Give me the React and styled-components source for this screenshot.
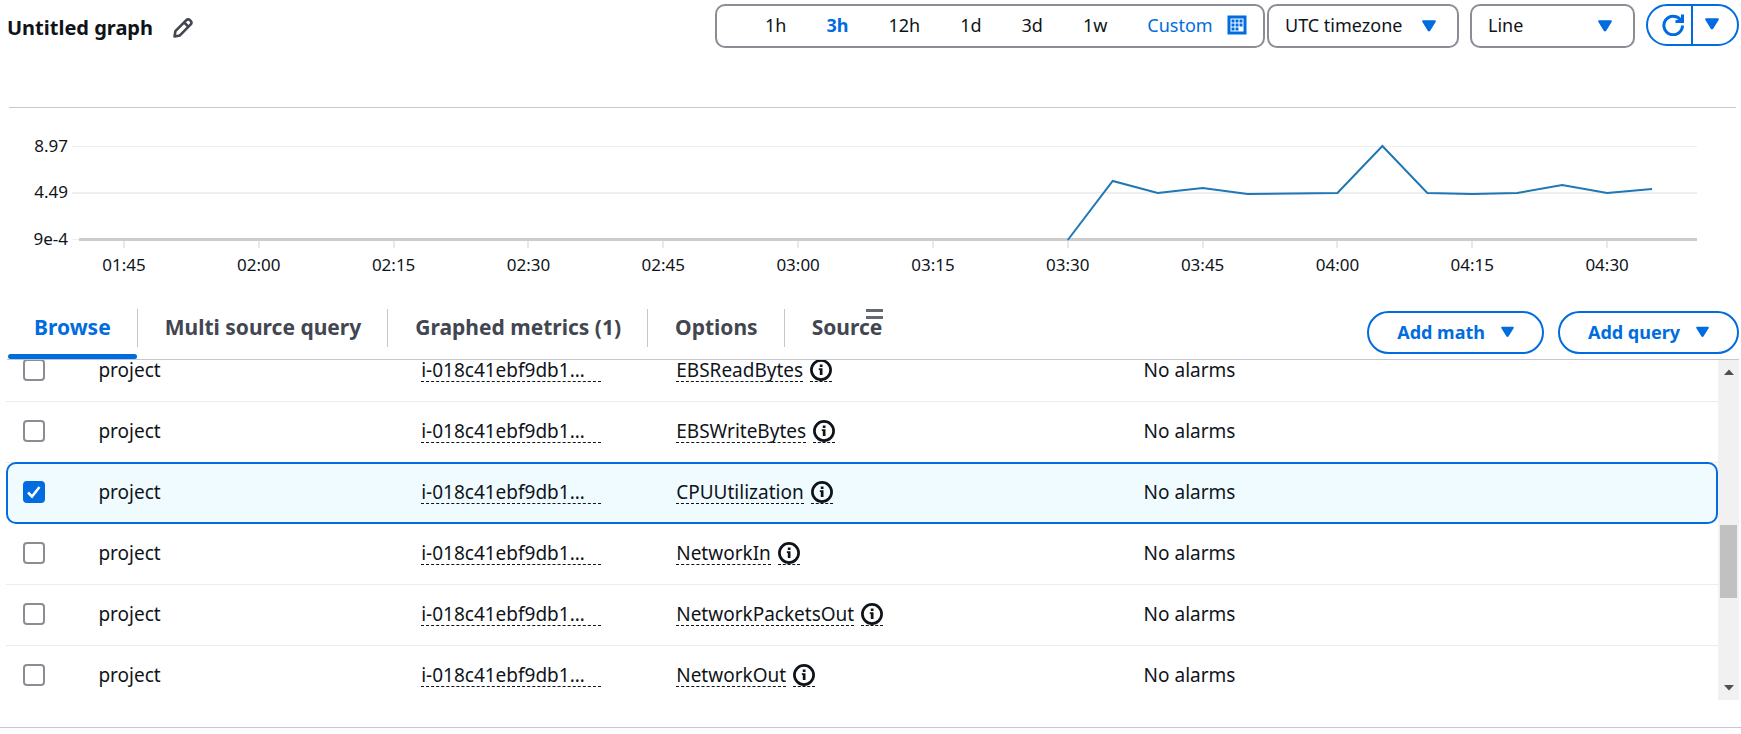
import React, { useState } from "react";
import styled, { createGlobalStyle, css } from "styled-components";

const blue = "#006ce0";
const ink = "#0f141a";
const grey = "#424650";
const line = "#c6c6cd";
const control = "#8c8c94";

const GlobalStyle = createGlobalStyle`
  * { box-sizing: border-box; }
  body {
    margin: 0;
    background: #fff;
    color: ${ink};
    font: 400 18px/24px "Noto Sans", "Open Sans", sans-serif;
  }
  button, select { font: inherit; color: inherit; }
`;

const Page = styled.main`
  display: flex;
  flex-direction: column;
  border-bottom: 1px solid ${line};
  padding-bottom: 27px;
`;

const Header = styled.header`
  display: flex;
  justify-content: space-between;
  align-items: flex-start;
  padding: 4px 2px 0 7px;
  min-height: 107px;
`;

const TitleGroup = styled.div`
  display: flex;
  align-items: center;
  gap: 16px;
  height: 48px;
`;

const Title = styled.h1`
  margin: 0;
  font-size: 20px;
  line-height: 28px;
  font-weight: 700;
`;

const IconButton = styled.button`
  display: flex;
  align-items: center;
  justify-content: center;
  padding: 4px;
  border: 0;
  background: none;
  color: ${grey};
  cursor: pointer;
`;

const Toolbar = styled.div`
  display: flex;
  align-items: flex-start;
`;

const RangeBox = styled.div`
  display: flex;
  align-items: center;
  gap: 40px;
  height: 44px;
  width: 550px;
  padding: 0 16px 2px 48px;
  border: 2px solid ${control};
  border-radius: 10px;
`;

const RangeButton = styled.button`
  display: flex;
  align-items: center;
  gap: 14px;
  padding: 0;
  border: 0;
  background: none;
  cursor: pointer;
  color: ${(p) => (p.$accent ? blue : ink)};
  font-weight: ${(p) => (p.$active ? 700 : 400)};
`;

const SelectBox = styled.div`
  position: relative;
  width: ${(p) => p.$width}px;
  margin-left: ${(p) => p.$gap}px;

  svg {
    position: absolute;
    top: 16px;
    right: 23px;
    pointer-events: none;
  }
`;

const Select = styled.select`
  display: block;
  appearance: none;
  width: 100%;
  height: 44px;
  padding: 0 40px 2px 16px;
  border: 2px solid ${control};
  border-radius: 10px;
  background: #fff;
`;

const SplitButton = styled.div`
  display: flex;
  height: 42px;
  margin-left: 11px;
  border: 2px solid ${blue};
  border-radius: 21px;
  overflow: hidden;
`;

const SplitPart = styled.button`
  display: flex;
  align-items: center;
  justify-content: center;
  width: 43px;
  padding: 0 0 0 6px;
  border: 0;
  background: none;
  color: ${blue};
  cursor: pointer;

  & + & {
    width: 46px;
    padding: 0 6px 2px 0;
    border-left: 2px solid ${blue};
  }
`;

const ChartPanel = styled.section`
  margin: 0 5px 0 9px;
  padding: 0 39px 0 70px;
  border-top: 1px solid ${line};
`;

const ChartSvg = styled.svg`
  display: block;
  width: 100%;
  height: 188px;
  overflow: visible;

  text { font-size: 17px; fill: ${ink}; }
`;

const TabBar = styled.div`
  display: flex;
  justify-content: space-between;
  align-items: flex-start;
  margin: 0 2px 0 7px;
  height: 64px;
  border-bottom: 1px solid ${line};
`;

const Tabs = styled.div`
  display: flex;
  position: relative;
  padding-top: 13px;
`;

const Tab = styled.button`
  position: relative;
  height: 38px;
  padding: 0 26px 2px 27px;
  border: 0;
  border-right: 1px solid ${line};
  background: none;
  color: ${grey};
  font-size: 21px;
  line-height: 28px;
  font-weight: 700;
  cursor: pointer;

  &:last-of-type { border-right: 0; padding-right: 0; }

  ${(p) =>
    p.$active &&
    css`
      color: ${blue};
      &::after {
        content: "";
        position: absolute;
        left: 1px;
        right: 0;
        bottom: -12px;
        height: 5px;
        border-radius: 3px;
        background: ${blue};
      }
    `}
`;

const DragHandle = styled.span`
  position: absolute;
  top: 13px;
  right: -1px;
  z-index: 1;
  width: 17px;
  height: 10px;
  border: solid #656871;
  border-width: 3px 0;
  cursor: row-resize;
`;

const Actions = styled.div`
  display: flex;
  gap: 14px;
  padding-top: 15px;
`;

const ActionButton = styled.button`
  display: flex;
  align-items: center;
  gap: 16px;
  height: 43px;
  padding: 0 28px 2px;
  border: 2px solid ${blue};
  border-radius: 22px;
  background: #fff;
  color: ${blue};
  font-weight: 700;
  cursor: pointer;
`;

const ScrollArea = styled.div`
  display: flex;
  height: 340px;
  margin: 0 2px 0 6px;
  overflow: hidden;
`;

const MetricsTable = styled.table`
  flex: 1;
  align-self: flex-start;
  margin-top: -19px;
  table-layout: fixed;
  border-collapse: separate;
  border-spacing: 0;
  font-size: 19px;
`;

const Row = styled.tr`
  position: relative;
  z-index: 0;

  ${(p) =>
    p.$selected &&
    css`
      td:first-child::before {
        content: "";
        position: absolute;
        z-index: -1;
        inset: -1px 0 0;
        border: 2px solid ${blue};
        border-radius: 10px;
        background: #f0fbff;
      }
    `}
`;

const Cell = styled.td`
  height: 61px;
  padding: 0 0 2px;
  border-bottom: 1px solid ${(p) => (p.$bare ? "transparent" : "#ebebf0")};
  vertical-align: middle;
  white-space: nowrap;
`;

const Checkbox = styled.input`
  appearance: none;
  display: block;
  width: 22px;
  height: 22px;
  margin: 0 0 0 17px;
  border: 2px solid ${control};
  border-radius: 4px;
  background: #fff;

  &:checked {
    border-color: ${blue};
    background: ${blue};
  }
`;

const CheckCell = styled.label`
  display: grid;
  justify-content: start;

  > * { grid-area: 1 / 1; }
  svg { margin: 4px 0 0 21px; pointer-events: none; z-index: 1; }
`;

const CellContent = styled.div`
  display: flex;
  align-items: center;
  gap: 7px;
`;

const Dashed = styled.span`
  width: ${(p) => (p.$wide ? "180px" : "auto")};
  height: 23px;
  line-height: 22px;
  border-bottom: 1px dashed ${ink};
`;

const InfoButton = styled.button`
  display: flex;
  height: 23px;
  padding: 0;
  border: 0;
  border-bottom: 1px dashed ${ink};
  background: none;
  cursor: pointer;
`;

const Scrollbar = styled.div`
  display: flex;
  flex-direction: column;
  align-items: center;
  width: 21px;
  padding: 9px 0;
  background: #f1f1f1;
`;

const Thumb = styled.div`
  width: 17px;
  height: 73px;
  margin: 150px 0 auto;
  background: #c1c1c1;
`;

const Caret = ({ size = 14 }) => (
  <svg width={size} height="12" viewBox="0 0 14 12" fill={blue} aria-hidden="true">
    <path d="M1.2.3h11.6c.9 0 1.3.9.8 1.6L8.200 10.700c-.6 1-1.800 1-2.400 0L.4 1.900C-.1 1.200.3.3 1.200.3z" />
  </svg>
);

const Pencil = () => (
  <svg width="20" height="20" viewBox="0 0 20 20" fill="none" stroke="currentColor" strokeWidth="2.600" strokeLinejoin="round" aria-hidden="true">
    <path d="M1.500 18.500l.9-5.400L13.100 2.300c1.200-1.200 2.900-1.200 4 0l.4.4c1.100 1.100 1.100 2.800 0 4L6.900 17.400z" />
    <path d="M11.200 4.500l4.200 4.200" />
  </svg>
);

const CalendarIcon = () => (
  <svg width="20" height="20" viewBox="0 0 20 20" fill={blue} aria-hidden="true">
    <rect x="2" y="2" width="16" height="16" fill="none" stroke={blue} strokeWidth="3" />
    <path d="M4.500 4.500h3v3h-3zM8.500 4.500h3v3h-3zM12.500 4.500h3v3h-3zM4.500 8.500h3v3h-3zM8.500 8.500h3v3h-3zM12.500 8.500h3v3h-3zM4.500 12.500h3v3h-3zM8.500 12.500h3v3h-3z" />
  </svg>
);

const RefreshIcon = () => (
  <svg width="22" height="22" viewBox="0 0 22 22" fill="none" stroke={blue} strokeWidth="3" aria-hidden="true">
    <path d="M20.500 11.500A9.300 9.300 0 1 1 18.500 5.700L20 7.200" />
    <path d="M20.500.5v6.900h-7" />
  </svg>
);

const InfoIcon = () => (
  <svg width="22" height="22" viewBox="0 0 22 22" aria-hidden="true">
    <circle cx="11" cy="11" r="9.600" fill="none" stroke={ink} strokeWidth="2.700" />
    <path d="M9.800 5.500h2.700V8H9.800zM8.800 9.200h3.700V16H9.800v-4.900h-1z" fill={ink} />
  </svg>
);

const ranges = ["1h", "3h", "12h", "1d", "3d", "1w"];
const tabs = ["Browse", "Multi source query", "Graphed metrics (1)", "Options", "Source"];
const times = ["01:45", "02:00", "02:15", "02:30", "02:45", "03:00", "03:15", "03:30", "03:45", "04:00", "04:15", "04:30"];
const metrics = ["EBSReadBytes", "EBSWriteBytes", "CPUUtilization", "NetworkIn", "NetworkPacketsOut", "NetworkOut"];

// [minutes after 01:40, y]
const series = [
  [110, 132], [115, 73], [120, 85], [125, 80], [130, 86], [140, 85], [145, 38],
  [150, 85], [155, 86], [160, 85], [165, 77], [170, 85], [175, 81],
];

function Chart() {
  return (
    <ChartPanel aria-label="CPU utilization graph">
      <ChartSvg>
        <g shapeRendering="crispEdges">
          <line x1="-7" x2="100%" y1="38.500" y2="38.500" stroke="#eee" />
          <line x1="-7" x2="100%" y1="85" y2="85" stroke="#eee" strokeWidth="2" />
          <line x1="-7" x2="0" y1="131.500" y2="131.500" stroke="#eee" />
          {times.map((t, i) => {
            const x = `${((5 + i * 15) / 180) * 100}%`;
            return <line key={t} x1={x} x2={x} y1="133" y2="140" stroke="#e8e8e8" strokeWidth="2" />;
          })}
          <line x1="0" x2="100%" y1="131.500" y2="131.500" stroke="#ccc" strokeWidth="3" />
        </g>
        <g textAnchor="end">
          <text x="-11" y="44">8.97</text>
          <text x="-11" y="90">4.49</text>
          <text x="-11" y="137">9e-4</text>
        </g>
        <g textAnchor="middle">
          {times.map((t, i) => (
            <text key={t} x={`${((5 + i * 15) / 180) * 100}%`} y="163">{t}</text>
          ))}
        </g>
        <svg width="100%" height="188" viewBox="0 0 180 188" preserveAspectRatio="none">
          <polyline
            points={series.map((p) => p.join(",")).join(" ")}
            fill="none"
            stroke="#1f77b4"
            strokeWidth="2"
            vectorEffect="non-scaling-stroke"
          />
        </svg>
      </ChartSvg>
    </ChartPanel>
  );
}

function MetricRow({ name, last }) {
  const [checked, setChecked] = useState(name === "CPUUtilization");
  const bare = last || checked;
  return (
    <Row $selected={checked}>
      <Cell $bare={bare}>
        <CheckCell>
          <Checkbox type="checkbox" aria-label={`Select ${name}`} checked={checked} onChange={() => setChecked(!checked)} />
          {checked && (
            <svg width="14" height="14" viewBox="0 0 14 14" fill="none" stroke="#fff" strokeWidth="2.500" aria-hidden="true">
              <path d="M1 7.500l4 4L12.500 2" />
            </svg>
          )}
        </CheckCell>
      </Cell>
      <Cell $bare={bare}>project</Cell>
      <Cell $bare={bare}>
        <CellContent><Dashed $wide>i-018c41ebf9db1…</Dashed></CellContent>
      </Cell>
      <Cell $bare={bare}>
        <CellContent>
          <Dashed>{name}</Dashed>
          <InfoButton aria-label={`About ${name}`}><InfoIcon /></InfoButton>
        </CellContent>
      </Cell>
      <Cell $bare={bare}>No alarms</Cell>
    </Row>
  );
}

export default function App() {
  const [range, setRange] = useState("3h");
  const [tab, setTab] = useState("Browse");
  return (
    <Page>
      <GlobalStyle />
      <Header>
        <TitleGroup>
          <Title>Untitled graph</Title>
          <IconButton aria-label="Edit graph name"><Pencil /></IconButton>
        </TitleGroup>
        <Toolbar>
          <RangeBox>
            {ranges.map((r) => (
              <RangeButton key={r} $active={r === range} $accent={r === range} onClick={() => setRange(r)}>{r}</RangeButton>
            ))}
            <RangeButton $accent>Custom<CalendarIcon /></RangeButton>
          </RangeBox>
          <SelectBox $width={192} $gap={2}>
            <Select aria-label="Timezone"><option>UTC timezone</option></Select>
            <Caret />
          </SelectBox>
          <SelectBox $width={165} $gap={11}>
            <Select aria-label="Graph type"><option>Line</option></Select>
            <Caret />
          </SelectBox>
          <SplitButton>
            <SplitPart aria-label="Refresh"><RefreshIcon /></SplitPart>
            <SplitPart aria-label="Refresh options"><Caret /></SplitPart>
          </SplitButton>
        </Toolbar>
      </Header>
      <Chart />
      <TabBar>
        <Tabs role="tablist">
          {tabs.map((t) => (
            <Tab key={t} role="tab" aria-selected={t === tab} $active={t === tab} onClick={() => setTab(t)}>{t}</Tab>
          ))}
          <DragHandle />
        </Tabs>
        <Actions>
          <ActionButton>Add math<Caret size={13} /></ActionButton>
          <ActionButton>Add query<Caret size={13} /></ActionButton>
        </Actions>
      </TabBar>
      <ScrollArea>
        <MetricsTable>
          <colgroup>
            <col width="5.400%" />
            <col width="18.850%" />
            <col width="14.900%" />
            <col width="27.300%" />
            <col />
          </colgroup>
          <tbody>
            {metrics.map((m, i) => (
              <MetricRow key={m} name={m} last={i === metrics.length - 1} />
            ))}
          </tbody>
        </MetricsTable>
        <Scrollbar aria-hidden="true">
          <svg width="10" height="6" viewBox="0 0 10 6" fill="#505050"><path d="M0 6l5-5.500L10 6z" /></svg>
          <Thumb />
          <svg width="10" height="6" viewBox="0 0 10 6" fill="#505050"><path d="M0 0l5 5.500L10 0z" /></svg>
        </Scrollbar>
      </ScrollArea>
    </Page>
  );
}
